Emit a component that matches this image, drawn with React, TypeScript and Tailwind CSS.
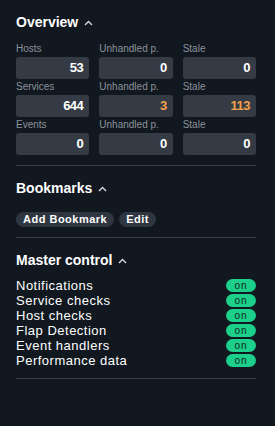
import React from 'react'

type Cell = { label: string; value: number; warn?: boolean }

const overview: Cell[][] = [
  [{ label: 'Hosts', value: 53 }, { label: 'Unhandled p.', value: 0 }, { label: 'Stale', value: 0 }],
  [{ label: 'Services', value: 644 }, { label: 'Unhandled p.', value: 3, warn: true }, { label: 'Stale', value: 113, warn: true }],
  [{ label: 'Events', value: 0 }, { label: 'Unhandled p.', value: 0 }, { label: 'Stale', value: 0 }],
]

const controls = [
  'Notifications',
  'Service checks',
  'Host checks',
  'Flap Detection',
  'Event handlers',
  'Performance data',
]

function Chevron() {
  return (
    <svg width="9" height="6" viewBox="0 0 9 6" className="ml-[6px] mt-[1px]">
      <path d="M1 5 L4.5 1.5 L8 5" fill="none" stroke="#d4d7db" strokeWidth="1.4" />
    </svg>
  )
}

function Title({ children }: { children: React.ReactNode }) {
  return (
    <div className="flex items-center h-4 text-[14px] leading-4 font-bold text-white">
      {children}
      <Chevron />
    </div>
  )
}

export default function App() {
  return (
    <div className="min-h-[426px] w-[275px] bg-[#111820] font-['Liberation_Sans',Arial,sans-serif]">
      <div className="w-[256px] pl-4">
        {/* overview */}
        <section className="pt-[14px] pb-[10px] border-b border-[#3b4047]">
          <Title>Overview</Title>
          <div className="mt-[12px] flex flex-col gap-px">
            {overview.map((row, i) => (
              <div key={i} className="grid grid-cols-3 gap-x-[10px]">
                {row.map((c, j) => (
                  <div key={j}>
                    <div className="text-[10px] leading-[13px] text-[#8b929b] mb-[2px]">{c.label}</div>
                    <div
                      className={`h-[22px] rounded-[3px] bg-[#343b45] flex items-center justify-end pr-[6px] text-[13px] font-bold tracking-[-0.5px] ${
                        c.warn ? 'text-[#f4a04b]' : 'text-white'
                      }`}
                    >
                      {c.value}
                    </div>
                  </div>
                ))}
              </div>
            ))}
          </div>
        </section>

        {/* bookmarks */}
        <section className="pt-[14px] pb-[10px] border-b border-[#3b4047]">
          <Title>Bookmarks</Title>
          <div className="mt-[16px] flex gap-[5px]">
            <button className="h-[15px] px-[7px] rounded-full bg-[#2e3641] text-white text-[11px] leading-[15px] font-bold tracking-[0.5px]">
              Add Bookmark
            </button>
            <button className="h-[15px] px-[7px] rounded-full bg-[#2e3641] text-white text-[11px] leading-[15px] font-bold tracking-[0.5px]">
              Edit
            </button>
          </div>
        </section>

        {/* master control */}
        <section className="pt-[14px] pb-[10px] border-b border-[#3b4047]">
          <Title>Master control</Title>
          <div className="mt-[10px]">
            {controls.map(name => (
              <div key={name} className="flex items-center justify-between h-[15px]">
                <span className="text-[13px] leading-[15px] text-white tracking-[0.5px]">{name}</span>
                <span className="w-[30px] h-[13px] rounded-full bg-[#1ccf8a] text-[#12261c] text-[10px] leading-[13px] tracking-[1px] text-center">
                  on
                </span>
              </div>
            ))}
          </div>
        </section>
      </div>
    </div>
  )
}
